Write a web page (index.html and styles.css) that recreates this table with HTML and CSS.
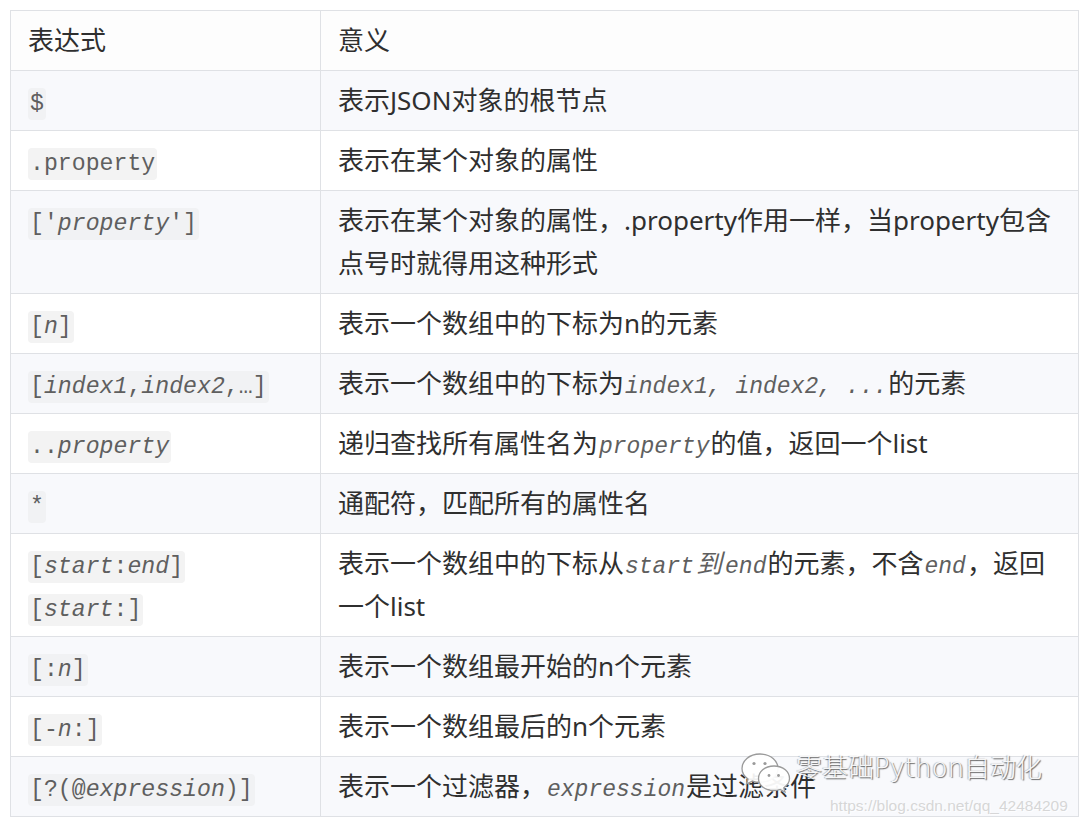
FILE: index.html
```html
<!DOCTYPE html>
<html lang="zh">
<head>
<meta charset="utf-8">
<title>JSONPath 表达式</title>
<link rel="stylesheet" href="styles.css">
</head>
<body>
<div class="page">
  <table class="doc-table">
    <colgroup><col class="c1"><col class="c2"></colgroup>
    <thead>
      <tr><th>表达式</th><th>意义</th></tr>
    </thead>
    <tbody>
      <tr><td><code>$</code></td><td>表示JSON对象的根节点</td></tr>
      <tr><td><code>.property</code></td><td>表示在某个对象的属性</td></tr>
      <tr><td><code>['<i>property</i>']</code></td><td>表示在某个对象的属性，.property作用一样，当property包含点号时就得用这种形式</td></tr>
      <tr><td><code>[<i>n</i>]</code></td><td>表示一个数组中的下标为n的元素</td></tr>
      <tr><td><code>[<i>index1</i>,<i>index2</i>,…]</code></td><td>表示一个数组中的下标为<em class="m">index1, index2, ...</em>的元素</td></tr>
      <tr><td><code>..<i>property</i></code></td><td>递归查找所有属性名为<em class="m">property</em>的值，返回一个list</td></tr>
      <tr><td><code>*</code></td><td>通配符，匹配所有的属性名</td></tr>
      <tr><td><code>[<i>start</i>:<i>end</i>]</code><br><code>[<i>start</i>:]</code></td><td>表示一个数组中的下标从<em class="m">start</em><em class="cjk">到</em><em class="m">end</em>的元素，不含<em class="m">end</em>，返回一个list</td></tr>
      <tr><td><code>[:<i>n</i>]</code></td><td>表示一个数组最开始的n个元素</td></tr>
      <tr><td><code>[-<i>n</i>:]</code></td><td>表示一个数组最后的n个元素</td></tr>
      <tr><td><code>[?(@<i>expression</i>)]</code></td><td>表示一个过滤器，<em class="m">expression</em>是过滤条件</td></tr>
    </tbody>
  </table>
  <div class="watermark">
    <div class="wm-top">
      <svg class="wm-icon" width="54" height="42" viewBox="0 0 54 42">
        <path d="M20 2 C9 2 2 9 2 16.5 C2 21 4.5 24.5 8 27 L6.5 32 L12.5 29 C15 29.8 17.5 30.2 20 30.2 C31 30.2 38 23.5 38 16.5 C38 9 31 2 20 2 Z" fill="rgba(255,255,255,0.92)" stroke="#9a9a9a" stroke-width="1.3"/>
        <circle cx="14" cy="11.5" r="1.6" fill="#9a9a9a"/>
        <circle cx="25" cy="11.5" r="1.6" fill="#9a9a9a"/>
        <path d="M34 14 C24.5 14 18.5 20 18.5 26.5 C18.5 33 24.5 38.5 34 38.5 C36 38.5 38 38.2 40 37.5 L45 40 L43.8 35.8 C47 33.5 49.5 30.2 49.5 26.5 C49.5 20 43.5 14 34 14 Z" fill="rgba(255,255,255,0.95)" stroke="#9a9a9a" stroke-width="1.3"/>
        <circle cx="29" cy="23.5" r="1.4" fill="#9a9a9a"/>
        <circle cx="38.5" cy="23.5" r="1.4" fill="#9a9a9a"/>
      </svg>
      <span class="wm-name">零基础Python自动化</span>
    </div>
    <div class="wm-url">https://blog.csdn.net/qq_42484209</div>
  </div>
</div>
</body>
</html>
```
FILE: styles.css
```css
html, body {
  margin: 0;
  padding: 0;
  background: #ffffff;
}

.page {
  position: relative;
  padding: 10px 2px 0 10px;
  width: 1068px;
}

.doc-table {
  border-collapse: collapse;
  width: 1068px;
  table-layout: fixed;
  font-family: "Noto Sans", "Noto Sans CJK SC", sans-serif;
  font-size: 26px;
  color: #2f2f2f;
}

.doc-table col.c1 { width: 310px; }
.doc-table col.c2 { width: 758px; }

.doc-table th,
.doc-table td {
  border: 1px solid #dfe1e5;
  padding: 8px 16px 8px 17px;
  line-height: 43px;
  text-align: left;
  vertical-align: top;
  font-weight: normal;
}

.doc-table thead tr { background: #fdfdfd; }
.doc-table tbody tr:nth-child(odd) { background: #f8f9fc; }
.doc-table tbody tr:nth-child(even) { background: #ffffff; }

.doc-table code {
  font-family: "Courier New", "Nimbus Mono PS", "FreeMono", "Liberation Mono", monospace;
  font-size: 23.2px;
  line-height: 1;
  color: #5f5f5f;
  background: #f3f3f3;
  padding: 3px 2px;
  border-radius: 4px;
}

.doc-table tbody tr:nth-child(odd) code { background: #f1f2f4; }

.doc-table code i { font-style: italic; }

.doc-table em {
  font-style: italic;
  line-height: 1;
}

.doc-table em.m {
  font-family: "Courier New", "Nimbus Mono PS", "FreeMono", "Liberation Mono", monospace;
  font-size: 23px;
  color: #5f5f5f;
  padding: 0 1px;
}

.doc-table em.cjk {
  font-family: "Noto Sans CJK SC", sans-serif;
  color: #5f5f5f;
  padding: 0 2px 0 1px;
}

.watermark {
  position: absolute;
  left: 740px;
  top: 750px;
  width: 330px;
  pointer-events: none;
}

.wm-top {
  display: flex;
  align-items: flex-start;
}

.wm-icon {
  flex: none;
  margin-top: 2px;
}

.wm-name {
  font-family: "DejaVu Sans", "Noto Sans CJK SC", sans-serif;
  font-size: 26px;
  font-weight: 300;
  line-height: 36px;
  color: rgba(255, 255, 255, 0.92);
  text-shadow: 1px 1px 1px rgba(60, 60, 60, 0.75), -1px 0 1px rgba(60, 60, 60, 0.35);
  margin-left: 2px;
}

.wm-url {
  font-family: "Liberation Sans", sans-serif;
  font-size: 15.5px;
  line-height: 18px;
  color: rgba(210, 210, 210, 0.9);
  text-shadow: 1px 1px 0 rgba(255, 255, 255, 0.8);
  margin-left: 90px;
  margin-top: 3px;
}
```
